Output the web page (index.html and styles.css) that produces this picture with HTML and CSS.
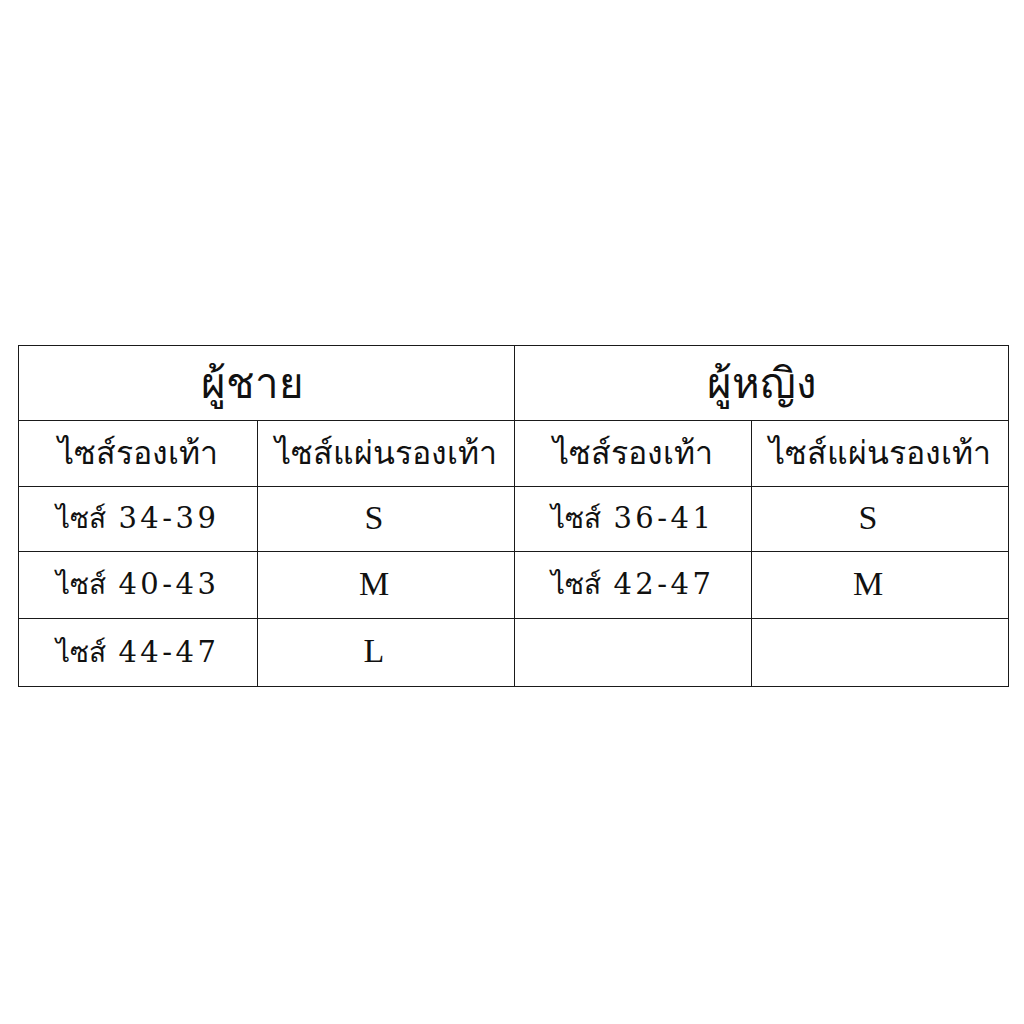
FILE: index.html
```html
<!DOCTYPE html>
<html lang="th">
<head>
<meta charset="utf-8">
<link rel="stylesheet" href="styles.css">
</head>
<body>
<div class="page">
<table class="size-table">
  <colgroup>
    <col class="c1"><col class="c2"><col class="c3"><col class="c4">
  </colgroup>
  <tr class="r-head">
    <th colspan="2" class="men">ผู้ชาย</th>
    <th colspan="2">ผู้หญิง</th>
  </tr>
  <tr class="r-sub">
    <td>ไซส์รองเท้า</td>
    <td>ไซส์แผ่นรองเท้า</td>
    <td>ไซส์รองเท้า</td>
    <td>ไซส์แผ่นรองเท้า</td>
  </tr>
  <tr class="r1">
    <td>ไซส์ <span class="num">34-39</span></td><td class="letter"><span>S</span></td><td>ไซส์ <span class="num">36-41</span></td><td class="letter"><span>S</span></td>
  </tr>
  <tr class="r2">
    <td>ไซส์ <span class="num">40-43</span></td><td class="letter"><span>M</span></td><td>ไซส์ <span class="num">42-47</span></td><td class="letter"><span>M</span></td>
  </tr>
  <tr class="r3">
    <td>ไซส์ <span class="num">44-47</span></td><td class="letter"><span>L</span></td><td></td><td></td>
  </tr>
</table>
</div>
</body>
</html>
```
FILE: styles.css
```css
html, body {
  margin: 0;
  padding: 0;
  background: #ffffff;
}
.page {
  width: 1024px;
  height: 1024px;
  padding-top: 345px;
  padding-left: 18px;
  box-sizing: border-box;
}
.size-table {
  border-collapse: collapse;
  width: 990px;
  table-layout: fixed;
  font-family: "DejaVu Serif", "Noto Sans", serif;
  color: #111;
  line-height: 1.1;
}
.c1 { width: 239px; }
.c2 { width: 257px; }
.c3 { width: 237px; }
.c4 { width: 257px; }
.size-table th,
.size-table td {
  border: 1.5px solid #1a1a1a;
  text-align: center;
  padding: 0;
  font-weight: normal;
  white-space: nowrap;
}
.r-head th { height: 72px; font-size: 42px; padding-top: 2px; }
.size-table th.men { padding-right: 28px; }
.r-sub td { height: 65px; font-size: 32px; }
.r1 td { height: 64px; font-size: 28px; }
.r2 td { height: 66px; font-size: 28px; }
.r3 td { height: 67px; font-size: 28px; }
.num {
  font-family: "DejaVu Serif", serif;
  font-size: 29px;
  letter-spacing: 3.5px;
  margin-left: 3px;
}
.size-table td.letter {
  font-family: "Liberation Serif", "Times New Roman", serif;
  font-size: 34px;
  padding-right: 24px;
}
.letter span {
  vertical-align: 3px;
}
```
